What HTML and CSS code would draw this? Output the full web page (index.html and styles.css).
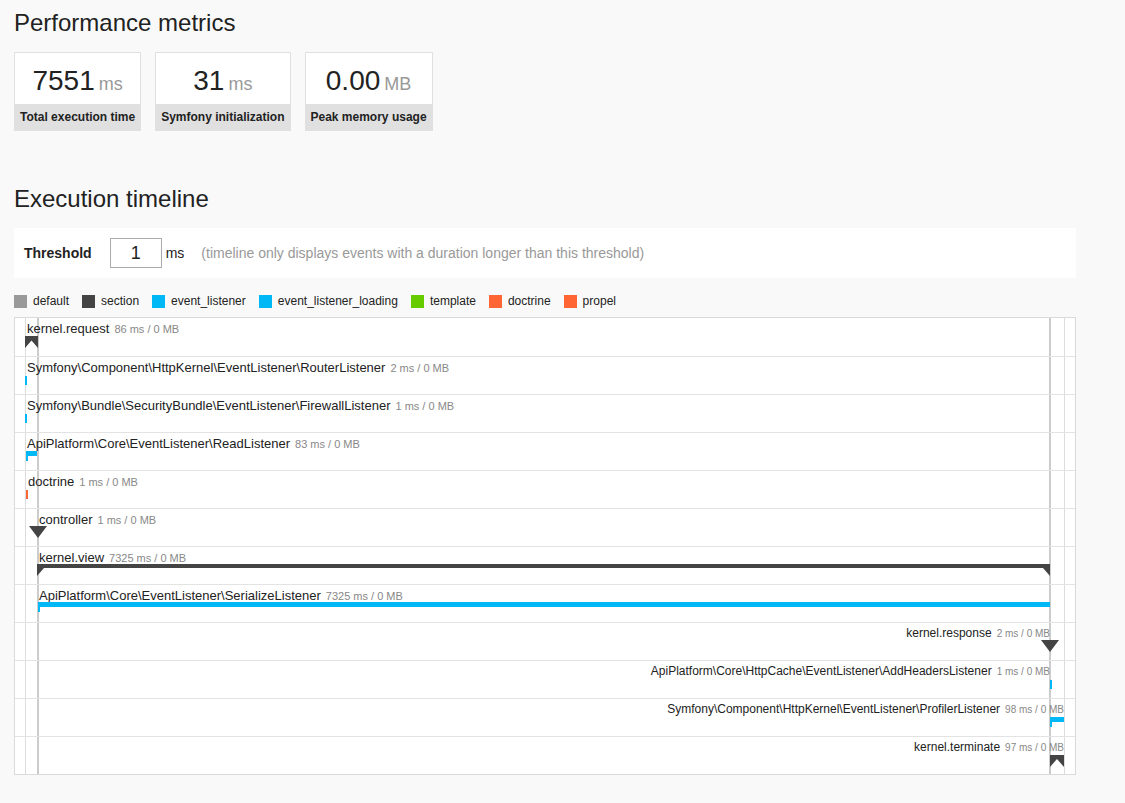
FILE: index.html
```html
<!DOCTYPE html>
<html lang="en">
<head>
  <meta charset="UTF-8">
  <title>Performance</title>
  <link rel="stylesheet" href="styles.css">
</head>
<body>
  <div class="page">
    <h2 class="first-title">Performance metrics</h2>

    <div class="metrics">
      <div class="metric">
        <div class="metric-value">7551<span class="unit">ms</span></div>
        <div class="metric-label">Total execution time</div>
      </div>
      <div class="metric">
        <div class="metric-value">31<span class="unit">ms</span></div>
        <div class="metric-label">Symfony initialization</div>
      </div>
      <div class="metric">
        <div class="metric-value">0.00<span class="unit">MB</span></div>
        <div class="metric-label">Peak memory usage</div>
      </div>
    </div>

    <h2 class="second-title">Execution timeline</h2>

    <div class="threshold">
      <label for="threshold">Threshold</label>
      <input type="text" id="threshold" value="1">
      <span>ms</span>
      <span class="hint">(timeline only displays events with a duration longer than this threshold)</span>
    </div>

    <div class="legend">
      <span class="legend-item"><i class="swatch c-default"></i>default</span>
      <span class="legend-item"><i class="swatch c-section"></i>section</span>
      <span class="legend-item"><i class="swatch c-listener"></i>event_listener</span>
      <span class="legend-item"><i class="swatch c-listener"></i>event_listener_loading</span>
      <span class="legend-item"><i class="swatch c-template"></i>template</span>
      <span class="legend-item"><i class="swatch c-doctrine"></i>doctrine</span>
      <span class="legend-item"><i class="swatch c-doctrine"></i>propel</span>
    </div>

    <div class="timeline">
      <svg class="tl-grid">
        <rect x="10" y="0" width="1" height="100%" fill="#dcdcdc"/>
        <rect x="22" y="0" width="2" height="100%" fill="#cccccc"/>
        <rect x="1034" y="0" width="2" height="100%" fill="#cccccc"/>
        <rect x="1049" y="0" width="1" height="100%" fill="#dcdcdc"/>
      </svg>

      <div class="tl-row">
        <span class="tl-label" style="left:12px">kernel.request<small>86 ms / 0 MB</small></span>
        <svg class="tl-mark" style="left:10px;top:18px" width="13" height="12"><polygon class="section" points="0,0 13,0 13,12 6.5,4.6 0,12"/></svg>
      </div>
      <div class="tl-row">
        <span class="tl-label" style="left:12px">Symfony\Component\HttpKernel\EventListener\RouterListener<small>2 ms / 0 MB</small></span>
        <svg class="tl-mark" style="left:10px;top:19px" width="2" height="9"><rect class="listener" width="2" height="9"/></svg>
      </div>
      <div class="tl-row">
        <span class="tl-label" style="left:12px">Symfony\Bundle\SecurityBundle\EventListener\FirewallListener<small>1 ms / 0 MB</small></span>
        <svg class="tl-mark" style="left:10px;top:19px" width="2" height="9"><rect class="listener" width="2" height="9"/></svg>
      </div>
      <div class="tl-row">
        <span class="tl-label" style="left:12px">ApiPlatform\Core\EventListener\ReadListener<small>83 ms / 0 MB</small></span>
        <svg class="tl-mark" style="left:11px;top:18px" width="11" height="10"><rect class="listener" width="11" height="5"/><rect class="listener" width="2" height="10"/></svg>
      </div>
      <div class="tl-row">
        <span class="tl-label" style="left:13px">doctrine<small>1 ms / 0 MB</small></span>
        <svg class="tl-mark" style="left:11px;top:19px" width="2" height="9"><rect class="doctrine" width="2" height="9"/></svg>
      </div>
      <div class="tl-row">
        <span class="tl-label" style="left:24px">controller<small>1 ms / 0 MB</small></span>
        <svg class="tl-mark" style="left:14px;top:17px" width="18" height="12"><polygon class="section" points="0,0 18,0 9,12"/></svg>
      </div>
      <div class="tl-row">
        <span class="tl-label" style="left:24px">kernel.view<small>7325 ms / 0 MB</small></span>
        <svg class="tl-mark" style="left:22px;top:17px" width="1013" height="12"><polygon class="section" points="0,0 1013,0 1013,12 1006,4 7,4 0,12"/></svg>
      </div>
      <div class="tl-row">
        <span class="tl-label" style="left:24px">ApiPlatform\Core\EventListener\SerializeListener<small>7325 ms / 0 MB</small></span>
        <svg class="tl-mark" style="left:23px;top:17px" width="1012" height="10"><rect class="listener" width="1012" height="5"/><rect class="listener" width="2" height="10"/></svg>
      </div>
      <div class="tl-row">
        <span class="tl-label tl-label-end" style="right:25px">kernel.response<small>2 ms / 0 MB</small></span>
        <svg class="tl-mark" style="left:1026px;top:17px" width="18" height="12"><polygon class="section" points="0,0 18,0 9,12"/></svg>
      </div>
      <div class="tl-row">
        <span class="tl-label tl-label-end" style="right:25px">ApiPlatform\Core\HttpCache\EventListener\AddHeadersListener<small>1 ms / 0 MB</small></span>
        <svg class="tl-mark" style="left:1035px;top:19px" width="2" height="9"><rect class="listener" width="2" height="9"/></svg>
      </div>
      <div class="tl-row">
        <span class="tl-label tl-label-end" style="right:11px">Symfony\Component\HttpKernel\EventListener\ProfilerListener<small>98 ms / 0 MB</small></span>
        <svg class="tl-mark" style="left:1035px;top:18px" width="14" height="10"><rect class="listener" width="14" height="5"/><rect class="listener" width="2" height="10"/></svg>
      </div>
      <div class="tl-row">
        <span class="tl-label tl-label-end" style="right:11px">kernel.terminate<small>97 ms / 0 MB</small></span>
        <svg class="tl-mark" style="left:1035px;top:18px" width="14" height="12"><polygon class="section" points="0,0 14,0 14,12 7,4 0,12"/></svg>
      </div>
    </div>
  </div>
</body>
</html>
```

FILE: styles.css
```css
body, html {
  margin: 0;
  background-color: #f9f9f9;
  font-family: "Liberation Sans", Arial, sans-serif;
  color: #222;
}

.page {
  width: 1062px;
  padding: 0 14px;
}

h2 {
  font-size: 24px;
  font-weight: normal;
  line-height: 29px;
  margin: 0 0 15px 0;
}

.first-title {
  margin-top: 8px;
}

.second-title {
  margin-top: 53px;
}

/* metrics */

.metrics {
  display: flex;
  gap: 14px;
}

.metric {
  background-color: #fff;
  border: 1px solid #e0e0e0;
  text-align: center;
}

.metric-value {
  padding-top: 4px;
  height: 47px;
  line-height: 47px;
  font-size: 28px;
}

.unit {
  font-size: 18px;
  color: #999;
  margin-left: 4px;
}

.metric-label {
  background-color: #e0e0e0;
  font-size: 12px;
  font-weight: bold;
  line-height: 14px;
  padding: 6px 5px;
}

/* threshold */

.threshold {
  display: flex;
  align-items: center;
  height: 50px;
  padding: 0 10px;
  background-color: #fff;
  font-size: 14px;
}

.threshold label {
  font-weight: bold;
  margin-right: 18px;
}

.threshold input {
  box-sizing: border-box;
  width: 52px;
  height: 30px;
  border: 1px solid #aaa;
  margin: 0 4px 0 0;
  padding: 0;
  font-family: "Liberation Sans", Arial, sans-serif;
  font-size: 18px;
  text-align: center;
  color: #222;
}

.hint {
  color: #999;
  margin-left: 17px;
}

/* legend */

.legend {
  display: flex;
  align-items: center;
  margin: 17px 0 9px 0;
  font-size: 12px;
  line-height: 13px;
}

.legend-item {
  display: flex;
  align-items: center;
  margin-right: 13px;
}

.swatch {
  display: inline-block;
  width: 13px;
  height: 13px;
  margin-right: 6px;
}

.c-default { background-color: #999; }
.c-section { background-color: #444; }
.c-listener { background-color: #00b8f5; }
.c-template { background-color: #66cc00; }
.c-doctrine { background-color: #ff6633; }

/* timeline */

.timeline {
  position: relative;
  background-color: #fff;
  border: 1px solid #dadada;
}

.tl-grid {
  position: absolute;
  top: 0;
  left: 0;
  width: 100%;
  height: 100%;
}

.tl-row {
  position: relative;
  height: 37px;
  border-top: 1px solid #e3e3e3;
}

.tl-row:first-of-type {
  height: 38px;
  border-top: 0;
}

.tl-label {
  position: absolute;
  top: 3px;
  font-size: 13px;
  line-height: 15px;
  white-space: nowrap;
  color: #222;
}

.tl-label small {
  font-size: 11px;
  color: #888;
  margin-left: 5px;
}

.tl-label-end {
  font-size: 12px;
}

.tl-label-end small {
  font-size: 10px;
}

.tl-mark {
  position: absolute;
}

.section { fill: #444; }
.listener { fill: #00b8f5; }
.doctrine { fill: #ff6633; }
```
